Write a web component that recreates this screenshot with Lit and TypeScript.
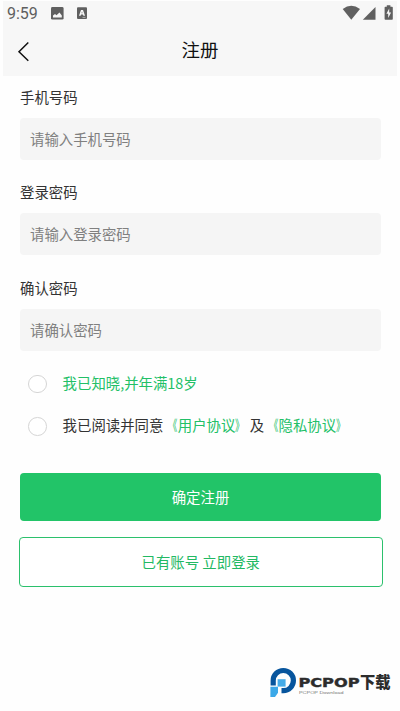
import { LitElement, html, css, svg } from "lit";
import { customElement, property } from "lit/decorators.js";

@customElement("status-bar")
class StatusBar extends LitElement {
  static styles = css`
    :host { display: flex; align-items: center; height: 26px; padding: 0 7px; color: #5f5f5f; box-sizing: border-box; }
    .time { font: 16px/26px Roboto, sans-serif; width: 43px; white-space: nowrap; padding-top: 1px; letter-spacing: -0.05px; }
    .grow { flex: 1; }
    svg { display: block; flex: none; }
    .notes { width: 38px; height: 14px; }
    .signals { width: 52px; height: 16px; }
  `;
  render() {
    return html`
      <span class="time">9:59</span>
      <svg class="notes" viewBox="0 0 38 14">
        <rect x="1" y="1" width="12.6" height="12.6" rx="1.4" fill="#606060" />
        <path d="M3 11.5V9.5l2-1.5 1.5 1.3L9.5 6.5l2.3 3v2z" fill="#f7f7f7" />
        <rect x="27" y="1.3" width="10" height="11.6" rx="1" fill="#606060" />
        <path fill-rule="evenodd" d="M29 9.8 31 4h2l2 5.8h-1.6l-.4-1.2h-2l-.4 1.2zM31.5 7.3h1l-.5-1.7z" fill="#f7f7f7" />
        <path d="M32.5 11.4h3" stroke="#ccc" stroke-width=".7" />
      </svg>
      <span class="grow"></span>
      <svg class="signals" viewBox="341 5 52 16">
        <path d="M342.7 8.9Q351.3 2.8 360 8.9L351.3 19.7z" fill="#606060" />
        <path d="M362.8 19.7 375.5 7v12.7z" fill="#606060" />
        <path d="M385.4 6.8h1.4V5.2h3.6v1.6h1.6q.8 0 .8.8v11.3q0 .8-.8.8h-6.6q-.8 0-.8-.8V7.6q0-.8.8-.8z" fill="#606060" />
        <path d="M389.2 8.5 386.4 13.7h1.8v4.2l2.9-5.5h-1.9z" fill="#f7f7f7" />
      </svg>
    `;
  }
}

@customElement("form-field")
class FormField extends LitElement {
  @property() label = "";
  @property() hint = "";
  static styles = css`
    :host { display: block; height: 95.4px; }
    .label { height: 42px; line-height: 41px; color: #333; }
    .box { height: 42px; line-height: 42px; border-radius: 4px; background: #f5f5f5; color: #808080; padding-left: 10px; }
  `;
  render() {
    return html`<div class="label">${this.label}</div><div class="box">${this.hint}</div>`;
  }
}

@customElement("site-mark")
class SiteMark extends LitElement {
  static styles = css`
    :host { display: block; width: 130px; height: 34px; }
    svg { display: block; }
    .word { font: bold 13px "DejaVu Sans", sans-serif; stroke: #2c2c2c; stroke-width: 0.4px; }
    .han { font: 900 15.5px "Noto Sans CJK SC", sans-serif; }
    .sub { font: 4px "Liberation Sans", sans-serif; }
  `;
  render() {
    return html`<svg width="130" height="34" viewBox="265 665 130 34">
      ${svg`
        <path d="M273.2 685.6V680.6A10.1 10.1 0 1 1 283.3 690.7H281.5" fill="none" stroke="#07559d" stroke-width="5.2" />
        <path d="M277.6 679.2h8v7.4h-8z" fill="#44abe8" />
        <path d="M270.4 686.8h7.6v6l-3 4.2h-4.6z" fill="#3ba8e8" />
        <text class="word" x="298.4" y="687.4" textLength="61.2" lengthAdjust="spacingAndGlyphs" fill="#2c2c2c">PCPOP</text>
        <text class="han" x="360" y="688" textLength="30.5" lengthAdjust="spacingAndGlyphs" fill="#2c2c2c">下载</text>
        <text class="sub" x="299" y="694.2" textLength="44.5" lengthAdjust="spacingAndGlyphs" fill="#777">PCPOP Download</text>
      `}
    </svg>`;
  }
}

@customElement("app-root")
class AppRoot extends LitElement {
  static styles = css`
    :host {
      display: flex; flex-direction: column; position: relative; width: 400px; height: 711px; overflow: hidden;
      box-sizing: border-box; background: #fefefe;
      font: 14.4px "Noto Sans CJK SC", sans-serif;
    }
    .top { height: 75px; flex: none; margin: 1px 3px 0; background: #f7f7f7; }
    status-bar { margin: -1px -3px 0; }
    .nav { display: grid; grid-template-columns: 40px 1fr 40px; height: 49px; align-items: center; }
    .back { display: block; margin-left: 14px; }
    .title { text-align: center; font-size: 18.5px; line-height: 47px; height: 49px; color: #111; }
    .form { padding: 0 19px 0 20px; }
    .checks { display: flex; flex-direction: column; margin-top: 0.8px; }
    .check { display: flex; align-items: center; height: 42.2px; padding-left: 8px; color: #333; white-space: nowrap; line-height: 22px; }
    .check > span { padding-bottom: 2px; }
    .ring { width: 16.6px; height: 16.6px; border: 1px solid #d5d5d5; border-radius: 50%; background: #fff; margin-right: 16px; }
    .green { color: #22c067; }
    .open, .close { display: inline-block; width: 14.4px; transform: scaleX(0.65); }
    .open { transform-origin: 100% 50%; }
    .close { transform-origin: 0 50%; }
    .btn { display: flex; align-items: center; justify-content: center; border-radius: 4px; box-sizing: border-box; padding-bottom: 1px; }
    .primary { height: 48px; margin-top: 25.6px; background: #22c468; color: #fff; }
    .outline { height: 50.6px; margin: 15.6px -1.5px 0 -1px; padding: 0 0 1px; border: 1px solid #2bc06c; color: #22b963; background: #fff; }
    site-mark { position: absolute; left: 265px; top: 665px; }
  `;
  fields = [
    ["手机号码", "请输入手机号码"],
    ["登录密码", "请输入登录密码"],
    ["确认密码", "请确认密码"],
  ];
  link(name: string) {
    return html`<span class="green"><span class="open">《</span>${name}<span class="close">》</span></span>`;
  }
  render() {
    return html`
      <header class="top">
        <status-bar></status-bar>
        <div class="nav">
          <svg class="back" width="14" height="22" viewBox="0 0 14 22"><path d="M11.3 2.5 2 11.7l9.3 9" fill="none" stroke="#111" stroke-width="1.5" /></svg>
          <span class="title">注册</span>
        </div>
      </header>
      <main class="form" lang="zh-CN">
        ${this.fields.map(([l, h]) => html`<form-field label=${l} hint=${h}></form-field>`)}
        <div class="checks">
          <div class="check"><i class="ring"></i><span class="green">我已知晓,并年满18岁</span></div>
          <div class="check"><i class="ring"></i><span>我已阅读并同意${this.link("用户协议")}及${this.link("隐私协议")}</span></div>
        </div>
        <div class="btn primary">确定注册</div>
        <div class="btn outline">已有账号 立即登录</div>
      </main>
      <site-mark></site-mark>
    `;
  }
}
